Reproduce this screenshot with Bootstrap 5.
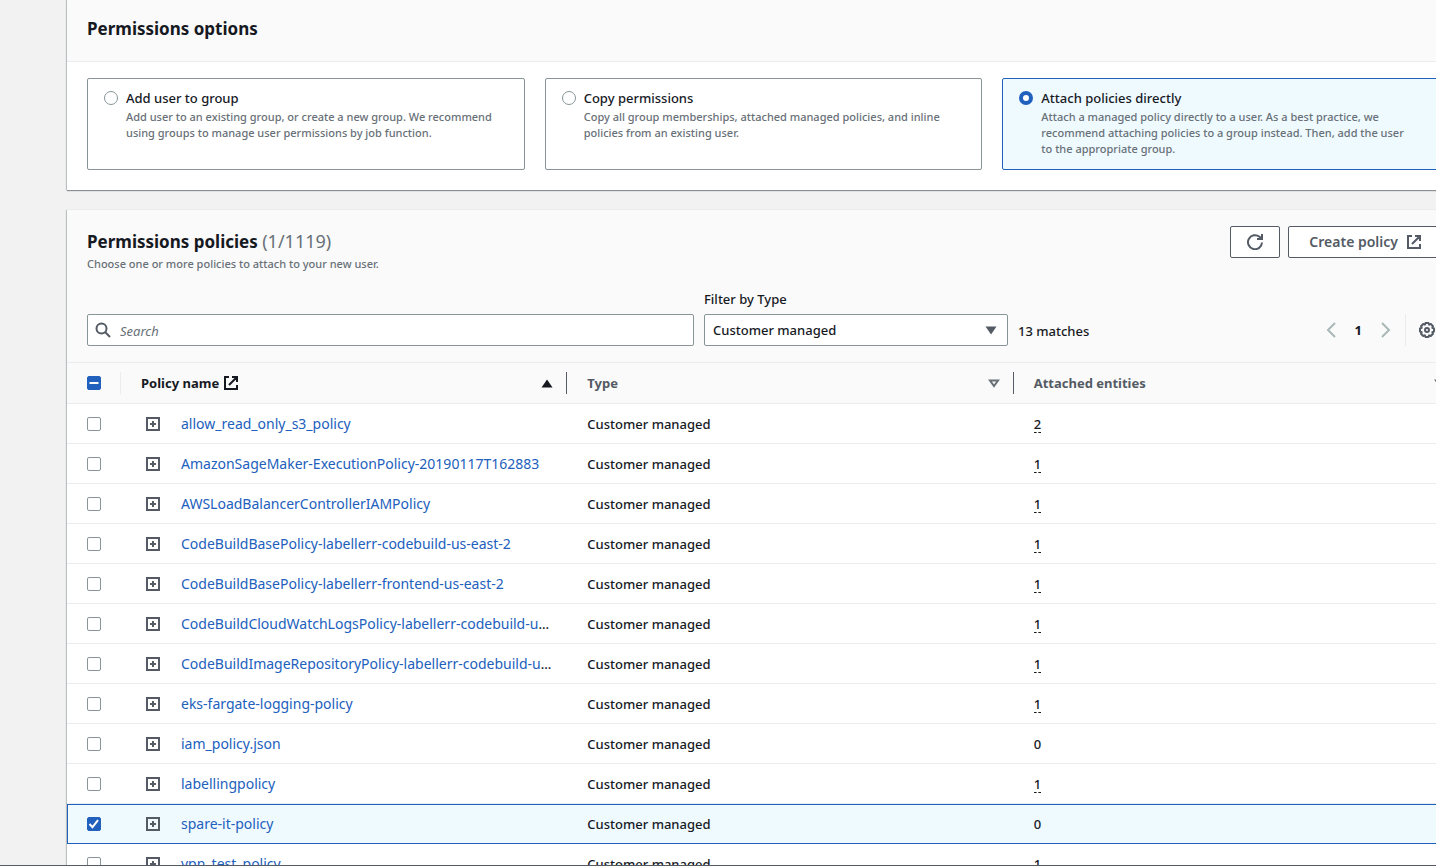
<!DOCTYPE html>
<html lang="en">
<head>
<meta charset="utf-8">
<meta name="viewport" content="width=device-width, initial-scale=1">
<title>Permissions options</title>
<link rel="stylesheet" href="https://cdn.jsdelivr.net/npm/bootstrap@5.3.0/dist/css/bootstrap.min.css">
<style>
  :root { --ink: #16191f; --muted: #687078; --slate: #545b64; --line: #eaeded; --edge: #879596; --blue: #2160bd; --picked: #effaff; }
  body { font: 500 13px/20px "Noto Sans", sans-serif; color: var(--ink); background: #f2f2f2; }
  .viewport { height: 100vh; overflow: hidden; border-bottom: 1px solid var(--slate); padding-left: 67px; }
  /* The panels run on past the right edge of the window. */
  .canvas { margin-right: -24px; }
  .panel { background: #fff; box-shadow: 0 1px 1px #8a8f94, -1px 0 1px #c4c8ca; }
  .panel-top { background: #fafafa; }
  .panel h2 { font-size: 17px; line-height: 22px; font-weight: 700; }
  .panel h2 .tally { font-size: 18px; font-weight: 400; color: var(--muted); }
  .options-top { padding: 18px 20px 21px; border-bottom: 1px solid var(--line); }
  .hint { font-size: 11px; line-height: 16px; color: var(--muted); }
  .choices { padding: 16px 20px 20px; gap: 20px; }
  .choice { flex: 1 1 0; min-height: 92px; padding: 9px 28px 11px 16px; border: 1px solid var(--edge); border-radius: 2px; }
  .choice.picked { background: var(--picked); border-color: var(--blue); }
  .choice-name { margin-bottom: 1px; }
  .form-check-input { width: 14px; height: 14px; margin: 0; border-color: var(--edge); flex: none; float: none; display: block; }
  .form-check-input[type=checkbox] { border-radius: 2px; background-origin: border-box; background-size: 14px 14px; }
  .form-check-input:checked, .form-check-input[type=checkbox]:indeterminate { background-color: var(--blue); border-color: var(--blue); }
  .form-check-input[type=checkbox]:indeterminate { background-image: url("data:image/svg+xml,%3Csvg xmlns='http://www.w3.org/2000/svg' viewBox='0 0 14 14'%3E%3Cpath d='M2.5 7h9' stroke='%23fff' stroke-width='2'/%3E%3C/svg%3E"); }
  .form-check-input:checked[type=checkbox] { background-image: url("data:image/svg+xml,%3Csvg xmlns='http://www.w3.org/2000/svg' viewBox='0 0 14 14'%3E%3Cpath d='M2.500 7l3 3.200 5.500-7' fill='none' stroke='%23fff' stroke-width='2'/%3E%3C/svg%3E"); }
  .choice .form-check-input { margin-top: 3px; }
  .form-check-input:checked[type=radio] { background-image: none; background-color: #fff; border: 4px solid var(--blue); }
  .policies { margin-top: 20px; }
  .policies-top { padding: 16px 20px; }
  .policies-top .hint { margin: 3px 0 0; }
  .cmd { height: 32px; border: 1px solid var(--slate); border-radius: 2px; background: #fff; color: var(--slate); font-size: 14px; line-height: 20px; font-weight: 600; padding: 0 17px 0 20px; }
  .cmd-icon { padding: 0 16px; line-height: 0; }
  .tools { gap: 10px; margin-top: 17px; }
  .tools label { margin-bottom: 5px; }
  .tools .matches { line-height: 30px; }
  .field { height: 32px; border: 1px solid var(--edge); border-radius: 2px; font-size: 13px; line-height: 20px; font-weight: 500; color: var(--ink); padding: 5px 8px; }
  .search-box { flex: 0 1 607px; }
  .search-box svg { top: 8px; left: 8px; }
  .search-box .field { padding: 6px 8px 4px 32px; }
  .search-box .field::placeholder { font-style: italic; font-weight: 400; color: var(--muted); }
  .type-box { width: 304px; }
  .type-box .field { background: #fff url("data:image/svg+xml,%3Csvg xmlns='http://www.w3.org/2000/svg' width='12' height='9'%3E%3Cpath d='M.5.5h11L6 8.5z' fill='%23545b64'/%3E%3C/svg%3E") no-repeat right 10px center; background-size: 12px 9px; }
  .icon-btn { border: 0; background: none; padding: 0; line-height: 0; }
  .pager { gap: 19px; height: 32px; margin-right: 4px; }
  .gear { border-left: 1px solid var(--line); padding: 0 5px 0 13px; height: 32px; }
  .grid { table-layout: fixed; width: 100%; border-collapse: separate; border-spacing: 0; }
  .grid th, .grid td { height: 40px; padding: 0 20px; vertical-align: middle; white-space: nowrap; border-bottom: 1px solid var(--line); }
  .grid thead th { height: 42px; background: #fafafa; border-top: 1px solid var(--line); color: var(--slate); font-weight: 700; }
  .grid thead .sorted { color: var(--ink); }
  .grid .tick-col { width: 54px; padding-right: 0; }
  .grid th.bars { padding-right: 0; }
  .bars > div { height: 22px; border-right: 1px solid var(--slate); padding-right: 13px; }
  .tick-col > div { height: 22px; border-right: 1px solid var(--line); }
  .grid .name-cell { padding: 0 14px 0 25px; }
  .expander { margin-right: 21px; }
  .grid a { color: var(--blue); text-decoration: none; font-size: 14px; font-weight: 400; }
  .grid .uses { border: 0; border-bottom: 1px dashed var(--ink); background: none; padding: 0; font-weight: 500; line-height: 16px; color: var(--ink); }
  .grid tr.picked td { background: var(--picked); border-bottom-color: var(--blue); box-shadow: inset 0 1px var(--blue); }
  .grid tr.picked td:first-child { box-shadow: inset 1px 1px var(--blue); }
</style>
</head>
<body>
<svg class="d-none" xmlns="http://www.w3.org/2000/svg">
  <symbol id="external" viewBox="0 0 16 16"><path d="M6 2H2v12h12v-4M9 2h5v5M14 2L6 10" fill="none" stroke="currentColor" stroke-width="2"/></symbol>
  <symbol id="expand" viewBox="0 0 14 14"><path d="M1 1h12v12H1z" fill="none" stroke="currentColor" stroke-width="2"/><path d="M7 4v6M4 7h6" stroke="currentColor" stroke-width="2"/></symbol>
</svg>
<div class="viewport">
  <main class="canvas">
    <section class="panel">
      <div class="panel-top options-top"><h2 class="m-0">Permissions options</h2></div>
      <div class="choices d-flex">
        <label class="choice d-flex gap-2" for="opt-group">
          <input class="form-check-input" type="radio" name="option" id="opt-group">
          <span><span class="choice-name d-block">Add user to group</span>
          <span class="hint d-block">Add user to an existing group, or create a new group. We recommend using groups to manage user permissions by job function.</span></span>
        </label>
        <label class="choice d-flex gap-2" for="opt-copy">
          <input class="form-check-input" type="radio" name="option" id="opt-copy">
          <span><span class="choice-name d-block">Copy permissions</span>
          <span class="hint d-block">Copy all group memberships, attached managed policies, and inline policies from an existing user.</span></span>
        </label>
        <label class="choice picked d-flex gap-2" for="opt-attach">
          <input class="form-check-input" type="radio" name="option" id="opt-attach" checked>
          <span><span class="choice-name d-block">Attach policies directly</span>
          <span class="hint d-block">Attach a managed policy directly to a user. As a best practice, we recommend attaching policies to a group instead. Then, add the user to the appropriate group.</span></span>
        </label>
      </div>
    </section>

    <section class="panel policies">
      <div class="panel-top policies-top">
        <div class="d-flex align-items-start">
          <div class="me-auto pt-1">
            <h2 class="m-0">Permissions policies <span class="tally">(1/1119)</span></h2>
            <p class="hint">Choose one or more policies to attach to your new user.</p>
          </div>
          <div class="d-flex gap-2">
            <button class="cmd cmd-icon" type="button" aria-label="Refresh"><svg width="16" height="16" viewBox="0 0 16 16" fill="none" stroke="currentColor" stroke-width="2"><path d="M15 8.500A7 7 0 1 1 12.500 2.800L15 5M15 0v5H10"/></svg></button>
            <button class="cmd d-flex align-items-center gap-2 text-nowrap" type="button">Create policy <svg width="16" height="16"><use href="#external"/></svg></button>
          </div>
        </div>
        <div class="tools d-flex align-items-end">
          <div class="search-box position-relative">
            <svg class="position-absolute" width="16" height="16" viewBox="0 0 16 16" fill="none" stroke="#545b64" stroke-width="2"><circle cx="6.500" cy="6.500" r="5"/><path d="M10 10l5 5"/></svg>
            <input class="field w-100" type="search" placeholder="Search" aria-label="Search">
          </div>
          <div class="type-box">
            <label class="d-block" for="type">Filter by Type</label>
            <select class="field form-select" id="type"><option>Customer managed</option></select>
          </div>
          <span class="matches me-auto">13 matches</span>
          <nav class="pager d-flex align-items-center" aria-label="Pages">
            <button class="icon-btn" type="button" aria-label="Previous page"><svg width="10" height="16" viewBox="0 0 10 16" fill="none" stroke="#aab7b8" stroke-width="2"><path d="M9 1L2 8l7 7"/></svg></button>
            <b>1</b>
            <button class="icon-btn" type="button" aria-label="Next page"><svg width="10" height="16" viewBox="0 0 10 16" fill="none" stroke="#aab7b8" stroke-width="2"><path d="M1 1l7 7-7 7"/></svg></button>
          </nav>
          <button class="icon-btn gear" type="button" aria-label="Preferences"><svg width="16" height="16" viewBox="0 0 16 16" fill="none" stroke="#545b64" stroke-width="2" stroke-linejoin="round"><path d="M6.500 1h3l.6 1.700 1.700-.7 2.200 2.200-.7 1.700 1.700.6v3l-1.700.6.700 1.700-2.200 2.200-1.700-.7-.6 1.700h-3l-.6-1.700-1.700.7L2 11.800l.7-1.700L1 9.500v-3l1.700-.6L2 4.200 4.200 2l1.700.7z"/><circle cx="8" cy="8" r="2"/></svg></button>
        </div>
      </div>
      <table class="grid">
        <colgroup><col class="tick-col"><col><col><col></colgroup>
        <thead>
          <tr>
            <th class="tick-col" scope="col"><div class="d-flex align-items-center"><input class="form-check-input" type="checkbox" id="all" aria-label="Select all policies"></div></th>
            <th class="bars sorted" scope="col"><div class="d-flex align-items-center"><span class="me-1">Policy name</span><svg width="16" height="16"><use href="#external"/></svg><svg class="ms-auto" width="12" height="9" viewBox="0 0 12 9"><path d="M.5 8.500h11L6 .5z" fill="#16191f"/></svg></div></th>
            <th class="bars" scope="col"><div class="d-flex align-items-center justify-content-between">Type<svg width="12" height="9" viewBox="0 0 12 9"><path d="M2 1.500h8L6 7z" fill="none" stroke="#687078" stroke-width="2"/></svg></div></th>
            <th class="bars" scope="col"><div class="d-flex align-items-center justify-content-between">Attached entities<svg width="12" height="9" viewBox="0 0 12 9"><path d="M2 1.500h8L6 7z" fill="none" stroke="#687078" stroke-width="2"/></svg></div></th>
          </tr>
        </thead>
        <tbody id="rows"></tbody>
      </table>
    </section>
  </main>
</div>
<script src="https://cdn.jsdelivr.net/npm/bootstrap@5.3.0/dist/js/bootstrap.bundle.min.js"></script>
<script>
  const policies = [
    ["allow_read_only_s3_policy", 2], ["AmazonSageMaker-ExecutionPolicy-20190117T162883", 1],
    ["AWSLoadBalancerControllerIAMPolicy", 1], ["CodeBuildBasePolicy-labellerr-codebuild-us-east-2", 1],
    ["CodeBuildBasePolicy-labellerr-frontend-us-east-2", 1],
    ["CodeBuildCloudWatchLogsPolicy-labellerr-codebuild-us-east-2", 1],
    ["CodeBuildImageRepositoryPolicy-labellerr-codebuild-us-east-2", 1],
    ["eks-fargate-logging-policy", 1], ["iam_policy.json", 0], ["labellingpolicy", 1],
    ["spare-it-policy", 0, true], ["vpn_test_policy", 1]
  ];
  // Long names are shortened after the region's first letter.
  const shorten = name => name.length > 52 ? [name.slice(0, name.lastIndexOf("us-east") + 1), "..."] : [name, ""];
  document.getElementById("rows").innerHTML = policies.map(([name, uses, picked]) => {
    const [shown, dots] = shorten(name);
    return `
    <tr class="${picked ? "picked" : ""}">
      <td class="tick-col"><input class="form-check-input" type="checkbox" aria-label="Select ${name}" ${picked ? "checked" : ""}></td>
      <td class="name-cell"><div class="d-flex align-items-center">
        <button class="icon-btn expander" type="button" aria-label="Expand ${name}"><svg width="14" height="14" color="#545b64"><use href="#expand"/></svg></button>
        <a href="#">${shown}</a>${dots}</div></td>
      <td>Customer managed</td>
      <td>${uses ? `<button class="uses" type="button">${uses}</button>` : uses}</td>
    </tr>`;
  }).join("");
  document.getElementById("all").indeterminate = true;
</script>
</body>
</html>
